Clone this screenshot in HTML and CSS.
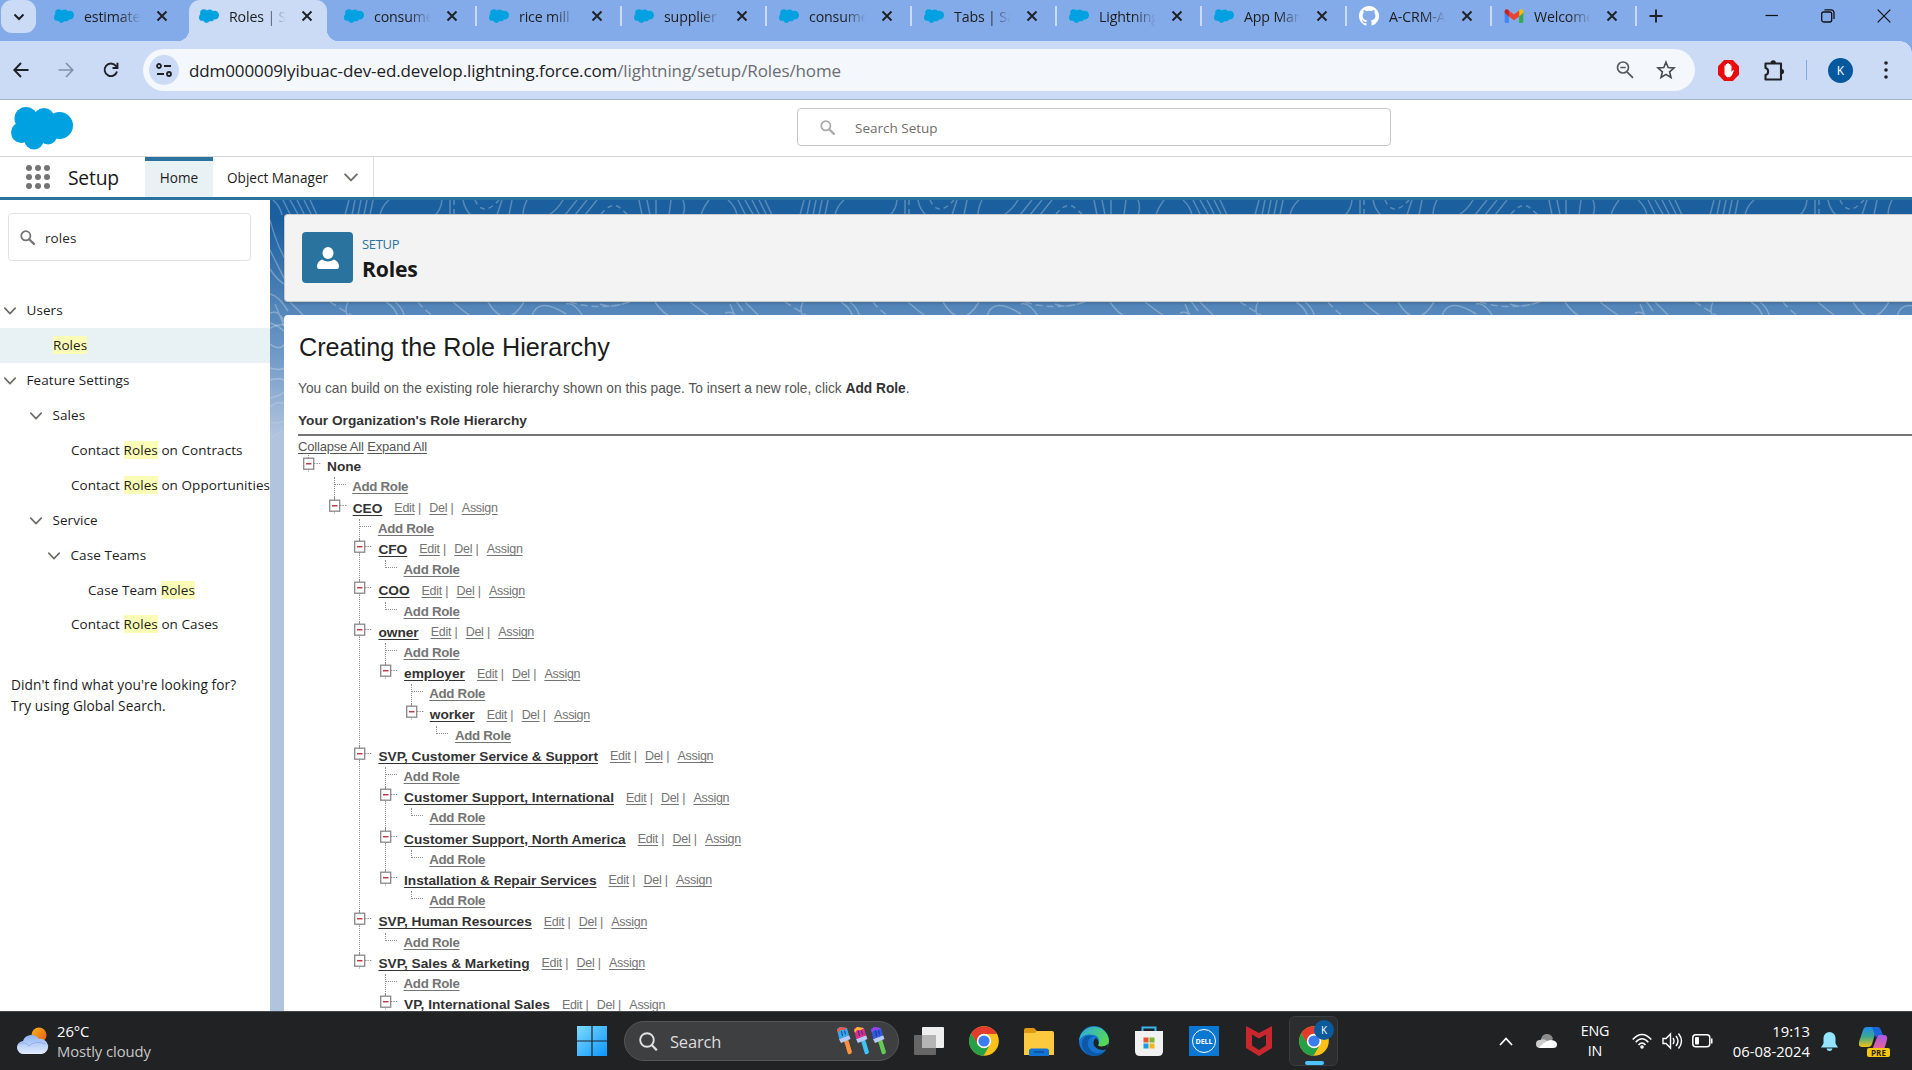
FILE: index.html
```html
<!DOCTYPE html>
<html lang="en">
<head>
<meta charset="utf-8">
<title>Roles | Salesforce</title>
<link rel="stylesheet" href="styles.css">
</head>
<body>
<svg class="defs" width="0" height="0" aria-hidden="true">
  <defs>
    <symbol id="cloud" viewBox="0 0 62 43"><g fill="#00a1e0"><circle cx="15" cy="12" r="11.5"/><circle cx="33" cy="12" r="10.5"/><circle cx="48.500" cy="19" r="13.500"/><circle cx="10.500" cy="26" r="10.500"/><circle cx="23" cy="33.500" r="9.500"/><circle cx="37" cy="29" r="9"/><rect x="13" y="10" width="30" height="22"/></g></symbol>
    <symbol id="close" viewBox="0 0 12 12"><path d="M1.500 1.500l9 9M10.500 1.500l-9 9" stroke="#1f2023" stroke-width="1.900" fill="none"/></symbol>
    <symbol id="chev" viewBox="0 0 12 8"><path d="M.8 1.200L6 6.600l5.200-5.400" stroke="#706e6b" stroke-width="1.700" fill="none" stroke-linecap="round" stroke-linejoin="round"/></symbol>
    <symbol id="lens" viewBox="0 0 16 16"><circle cx="6.200" cy="6.200" r="4.900" fill="none" stroke="currentColor" stroke-width="1.900"/><path d="M9.800 9.800l5 5" stroke="currentColor" stroke-width="2.300" stroke-linecap="round"/></symbol>
    <symbol id="box" viewBox="0 0 18 17"><path d="M5.500 0v3M5.500 14.500v2.500" stroke="#888" stroke-dasharray="1 1"/><path d="M11 8.500h7" stroke="#888" stroke-dasharray="1.300 1.200"/><rect x=".7" y="3.200" width="10" height="11" fill="#fff" stroke="#888" stroke-width="1.300"/><path d="M3 8.700h5.500" stroke="#c23b48" stroke-width="1.500"/></symbol>
    <symbol id="chrome" viewBox="0 0 30 30"><circle cx="15" cy="15" r="14.800" fill="#fbc117"/><path d="M2.200 7.500A14.800 14.800 0 0 1 27.900 8H15a7 7 0 0 0-6.300 4.200L8.500 18.500z" fill="#e33b2e"/><path d="M2.200 7.500A14.800 14.800 0 0 0 14.500 29.800L21 18.700A7 7 0 0 1 8.900 18.500z" fill="#24a148"/><circle cx="15" cy="15" r="7.200" fill="#fff"/><circle cx="15" cy="15" r="5.600" fill="#3b7ded"/></symbol>
    <symbol id="brush" viewBox="0 0 17 28"><path d="M8 14l4-2 4 13q-1 3-4 2z" fill="var(--handle)"/><path d="M3 12l10-4 1.500 4-9.500 4z" fill="#b9c9f5"/><path d="M1 2l3-2 7 1 2 7.500L3.200 12z" fill="var(--paint)"/><path d="M1 3l3-3 7 1-3 2-4 0-2 3z" fill="var(--tip)"/><path d="M5.500 4l1 5M8.500 3.500l1 4" stroke="#173a7c" stroke-width="1"/></symbol>
  </defs>
</svg>

<div class="tabstrip">
  <div class="tab-search"><svg width="12" height="8" viewBox="0 0 12 8"><path d="M1.500 1.500L6 6l4.500-4.500" stroke="#1f2023" stroke-width="2" fill="none"/></svg></div>
  <div class="tabs">
    <div class="tab"><svg class="fav"><use href="#cloud"/></svg><span class="tab-title">estimate</span><svg class="x"><use href="#close"/></svg></div>
    <div class="tab active"><svg class="fav"><use href="#cloud"/></svg><span class="tab-title">Roles | Sa</span><svg class="x"><use href="#close"/></svg></div>
    <div class="tab sep"><svg class="fav"><use href="#cloud"/></svg><span class="tab-title">consume</span><svg class="x"><use href="#close"/></svg></div>
    <div class="tab sep"><svg class="fav"><use href="#cloud"/></svg><span class="tab-title">rice mill |</span><svg class="x"><use href="#close"/></svg></div>
    <div class="tab sep"><svg class="fav"><use href="#cloud"/></svg><span class="tab-title">supplier</span><svg class="x"><use href="#close"/></svg></div>
    <div class="tab sep"><svg class="fav"><use href="#cloud"/></svg><span class="tab-title">consume</span><svg class="x"><use href="#close"/></svg></div>
    <div class="tab sep"><svg class="fav"><use href="#cloud"/></svg><span class="tab-title">Tabs | Sa</span><svg class="x"><use href="#close"/></svg></div>
    <div class="tab sep"><svg class="fav"><use href="#cloud"/></svg><span class="tab-title">Lightning</span><svg class="x"><use href="#close"/></svg></div>
    <div class="tab sep"><svg class="fav"><use href="#cloud"/></svg><span class="tab-title">App Man</span><svg class="x"><use href="#close"/></svg></div>
    <div class="tab sep"><svg class="fav git" viewBox="0 0 16 16"><path fill="#fff" d="M8 0C3.580 0 0 3.580 0 8c0 3.540 2.290 6.530 5.470 7.590.4.070.55-.17.55-.38v-1.490c-2.010.37-2.530-.49-2.690-.94-.09-.23-.48-.94-.82-1.130-.28-.15-.68-.52-.01-.53.63-.01 1.080.58 1.230.82.72 1.210 1.870.87 2.330.66.07-.52.28-.87.51-1.070-1.780-.2-3.640-.89-3.640-3.950 0-.87.31-1.590.82-2.150-.08-.2-.36-1.020.08-2.120 0 0 .67-.21 2.200.82a7.500 7.500 0 0 1 4 0c1.530-1.040 2.200-.82 2.200-.82.44 1.100.16 1.920.08 2.120.51.56.82 1.270.82 2.150 0 3.070-1.870 3.750-3.650 3.950.29.25.54.73.54 1.480v2.200c0 .21.15.46.55.38A8 8 0 0 0 8 0z"/></svg><span class="tab-title">A-CRM-A</span><svg class="x"><use href="#close"/></svg></div>
    <div class="tab sep"><svg class="fav mail" viewBox="0 0 20 15"><path d="M0 3h4.500v12H1.500A1.500 1.500 0 0 1 0 13.500z" fill="#4285f4"/><path d="M15.500 3H20v10.500a1.500 1.500 0 0 1-1.500 1.500h-3z" fill="#34a853"/><path d="M15.500 1.500C18 -.8 20 .5 20 2.500V4l-4.500 4z" fill="#fbbc04"/><path d="M4.500 1.500L10 6l5.500-4.500V8L10 12 4.500 8z" fill="#ea4335"/><path d="M0 2.500C0 .5 2.500-.8 4.500 1.500V8L0 4z" fill="#c5221f"/></svg><span class="tab-title">Welcome</span><svg class="x"><use href="#close"/></svg></div>
  </div>
  <svg class="plus" width="14" height="14" viewBox="0 0 14 14"><path d="M7 .5v13M.5 7h13" stroke="#1f2023" stroke-width="1.900"/></svg>
  <div class="window-controls">
    <svg width="14" height="14" viewBox="0 0 14 14"><path d="M.5 6.500h12.500" stroke="#111" stroke-width="1.200"/></svg>
    <svg width="14" height="14" viewBox="0 0 14 14"><rect x=".7" y="3" width="10" height="10" rx="2" fill="none" stroke="#111" stroke-width="1.300"/><path d="M3.500.8H10a3 3 0 0 1 3 3V10" fill="none" stroke="#111" stroke-width="1.300"/></svg>
    <svg width="14" height="14" viewBox="0 0 14 14"><path d="M.7.7l12.600 12.600M13.300.7L.7 13.300" stroke="#111" stroke-width="1.200"/></svg>
  </div>
</div>

<div class="toolbar">
  <div class="nav-buttons">
    <svg width="16" height="16" viewBox="0 0 16 16"><path d="M8 1L1.300 8 8 15M1.500 8H15.500" stroke="#1f2023" stroke-width="1.900" fill="none"/></svg>
    <svg width="16" height="16" viewBox="0 0 16 16"><path d="M8 1l6.700 7L8 15M14.500 8H.5" stroke="#8590a8" stroke-width="1.700" fill="none"/></svg>
    <svg width="16" height="16" viewBox="0 0 16 16"><path d="M14 9.500A6.300 6.300 0 1 1 12.800 3.800L14.500 6" stroke="#1f2023" stroke-width="1.900" fill="none"/><path d="M15.400.8V7H9.500V5h4V.8z" fill="#1f2023"/></svg>
  </div>
  <div class="omnibox">
    <div class="site-info"><svg width="16" height="14" viewBox="0 0 16 14"><g stroke="#1f2023" stroke-width="1.800" fill="none"><circle cx="3" cy="3" r="2"/><path d="M8 3h7M1 11h7"/><circle cx="13" cy="11" r="2"/></g></svg></div>
    <div class="url">ddm000009lyibuac-dev-ed.develop.lightning.force.com<span>/lightning/setup/Roles/home</span></div>
    <svg class="zoomout" width="18" height="18" viewBox="0 0 18 18"><g fill="none" stroke="#55585d" stroke-width="1.700"><circle cx="7" cy="6.500" r="5.500"/><path d="M11 10.800l6 6M4.300 6.500h5.400"/></g></svg>
    <svg width="20" height="20" viewBox="0 0 20 20"><path d="M10 2.200l2.200 5.400 5.800.4-4.400 3.800 1.400 5.700-5-3.100-5 3.100 1.400-5.700L2 8l5.800-.4z" fill="none" stroke="#46494e" stroke-width="1.600"/></svg>
  </div>
  <svg class="blocker" width="21" height="21" viewBox="0 0 21 21"><path d="M6.200 0h8.600L21 6.200v8.600L14.800 21H6.200L0 14.800V6.200z" fill="#ea0c0c"/><path d="M6.500 10V5.500h1.300V4h1.500V3h1.500v1h1.500v1.500h1.200V12l1.500-2 1 .6-2 4.400-2 2.300H9l-2.500-3z" fill="#fff"/></svg>
  <svg class="puzzle" width="21" height="21" viewBox="0 0 21 21"><path d="M1.500 3.500h15.500v16H1.500V15c3.500-.5 3.500-6.500 0-7z" fill="none" stroke="#1f2023" stroke-width="2.100" stroke-linejoin="round"/><path d="M6.500 3a2.700 2.700 0 0 1 5.400 0M17.500 9a2.600 2.600 0 0 1 0 5.200" fill="#1f2023"/></svg>
  <div class="divider"></div>
  <div class="avatar">K</div>
  <svg class="kebab" width="4" height="18" viewBox="0 0 4 18"><g fill="#1f2023"><circle cx="2" cy="2" r="1.800"/><circle cx="2" cy="9" r="1.800"/><circle cx="2" cy="16" r="1.800"/></g></svg>
</div>

<header class="sf-header">
  <svg class="logo"><use href="#cloud"/></svg>
  <div class="global-search"><svg width="15" height="15"><use href="#lens"/></svg><span>Search Setup</span></div>
</header>

<nav class="sf-nav">
  <svg class="waffle" width="24" height="24" viewBox="0 0 24 24"><g fill="#747474"><circle cx="3" cy="3" r="3"/><circle cx="12" cy="3" r="3"/><circle cx="21" cy="3" r="3"/><circle cx="3" cy="12" r="3"/><circle cx="12" cy="12" r="3"/><circle cx="21" cy="12" r="3"/><circle cx="3" cy="21" r="3"/><circle cx="12" cy="21" r="3"/><circle cx="21" cy="21" r="3"/></g></svg>
  <div class="app-name">Setup</div>
  <div class="nav-tab current"><span>Home</span></div>
  <div class="nav-tab"><span>Object Manager</span><svg width="14" height="9"><use href="#chev"/></svg></div>
</nav>

<div class="body">
  <aside class="sidebar">
    <div class="quick-find"><svg width="15" height="15"><use href="#lens"/></svg><span>roles</span></div>
    <ul class="setup-tree">
      <li class="l0"><svg><use href="#chev"/></svg>Users</li>
      <li class="l1 leaf selected"><mark>Roles</mark></li>
      <li class="l0"><svg><use href="#chev"/></svg>Feature Settings</li>
      <li class="l1"><svg><use href="#chev"/></svg>Sales</li>
      <li class="l2 leaf"><span>Contact <mark>Roles</mark> on Contracts</span></li>
      <li class="l2 leaf"><span>Contact <mark>Roles</mark> on Opportunities</span></li>
      <li class="l1"><svg><use href="#chev"/></svg>Service</li>
      <li class="l2"><svg><use href="#chev"/></svg>Case Teams</li>
      <li class="l3 leaf"><span>Case Team <mark>Roles</mark></span></li>
      <li class="l2 leaf"><span>Contact <mark>Roles</mark> on Cases</span></li>
    </ul>
    <p class="hint">Didn't find what you're looking for?<br>Try using Global Search.</p>
  </aside>

  <main class="canvas">
    <svg class="topo" width="1642" height="300">
      <defs><pattern id="contours" width="455" height="300" patternUnits="userSpaceOnUse">
        <g fill="none" stroke="#fff" stroke-opacity=".27" stroke-width="1.500">
          <path d="M3 0q7 6 9 15M13 0l8 16M20 0l9 16M27 0l8 16M34 0l8 16M40 0l7 15M79 0l-4 15M85 0l-3 15M91 0l-3 15M97 0l-3 15M103 0l-3 15M119 0q-7 6-9 15M172 0q-1 10-7 15M180 0v14M193 0q2 10 8 15M232 0l-5 15M242 0l-3 15M257 0q-4 8-4 15M293 0q-5 9-14 15M307 0l-12 15M317 0l-12 15M327 0l-12 15M369 0l3 15M377 0l3 15M386 0v15M401 0l-2 15M413 0q3 8 0 15M439 0q-6 8-8 15"/>
          <path stroke-dasharray="5 4" d="M184 0v15M205 0q8 18 24 0M331 14q10-12 18-7l9 8"/>
          <path d="M0 20q8 30 19 45M0 50l15 30M0 69q8 13 18 17M0 94q9 2 18 17M0 113q14-6 20 30M5 104q8 18 14 36M0 123q14 4 28 24M20 102l16 16M78 102q-5 10 2 16M116 102q10 6 12 16M125 102q8 6 10 16M183 102q10 9 20 16M218 102q18 30 36 0M262 116q6-20 34-2M296 104q8-3 18 14M385 102q8 12 18 16M420 102q10 8 22 16"/>
          <path stroke-dasharray="7 4" d="M148 102q8 10 20 17M300 102q30 9 60 0M330 104q14 5 30-3M60 102l24 15"/>
          <path d="M0 128q22-10 18 8T0 144M0 168q8 3 15 0M0 180q16-4 17 5t-17 13M0 207q8-7 15-3M0 222q8 3 18-3M2 238q6-8 16-6"/>
        </g></pattern></defs>
      <rect width="1642" height="260" fill="url(#contours)"/>
    </svg>
    <div class="page-header">
      <div class="role-icon"><svg width="22" height="22" viewBox="0 0 22 22"><ellipse cx="11" cy="6" rx="5.500" ry="6" fill="#fff"/><path d="M5 12.500q6 4 12 0 5 2 5 7 0 2.500-2 2.500H2q-2 0-2-2.500 0-5 5-7z" fill="#fff"/></svg></div>
      <div><div class="eyebrow">SETUP</div><h1>Roles</h1></div>
    </div>
    <section class="content">
      <h2>Creating the Role Hierarchy</h2>
      <p class="intro">You can build on the existing role hierarchy shown on this page. To insert a new role, click <b>Add Role</b>.</p>
      <h3>Your Organization's Role Hierarchy</h3>
      <div class="all-links"><a>Collapse All</a> <a>Expand All</a></div>
      <ul class="roles root">
        <li><div class="role"><svg><use href="#box"/></svg><b>None</b></div>
          <ul class="roles">
            <li class="add"><a>Add Role</a></li>
            <li><div class="role"><svg><use href="#box"/></svg><a class="name">CEO</a><a>Edit</a><i>|</i><a>Del</a><i>|</i><a>Assign</a></div>
              <ul class="roles">
                <li class="add"><a>Add Role</a></li>
                <li><div class="role"><svg><use href="#box"/></svg><a class="name">CFO</a><a>Edit</a><i>|</i><a>Del</a><i>|</i><a>Assign</a></div>
                  <ul class="roles"><li class="add"><a>Add Role</a></li></ul></li>
                <li><div class="role"><svg><use href="#box"/></svg><a class="name">COO</a><a>Edit</a><i>|</i><a>Del</a><i>|</i><a>Assign</a></div>
                  <ul class="roles"><li class="add"><a>Add Role</a></li></ul></li>
                <li><div class="role"><svg><use href="#box"/></svg><a class="name">owner</a><a>Edit</a><i>|</i><a>Del</a><i>|</i><a>Assign</a></div>
                  <ul class="roles">
                    <li class="add"><a>Add Role</a></li>
                    <li><div class="role"><svg><use href="#box"/></svg><a class="name">employer</a><a>Edit</a><i>|</i><a>Del</a><i>|</i><a>Assign</a></div>
                      <ul class="roles">
                        <li class="add"><a>Add Role</a></li>
                        <li><div class="role"><svg><use href="#box"/></svg><a class="name">worker</a><a>Edit</a><i>|</i><a>Del</a><i>|</i><a>Assign</a></div>
                          <ul class="roles"><li class="add"><a>Add Role</a></li></ul></li>
                      </ul></li>
                  </ul></li>
                <li><div class="role"><svg><use href="#box"/></svg><a class="name">SVP, Customer Service &amp; Support</a><a>Edit</a><i>|</i><a>Del</a><i>|</i><a>Assign</a></div>
                  <ul class="roles">
                    <li class="add"><a>Add Role</a></li>
                    <li><div class="role"><svg><use href="#box"/></svg><a class="name">Customer Support, International</a><a>Edit</a><i>|</i><a>Del</a><i>|</i><a>Assign</a></div>
                      <ul class="roles"><li class="add"><a>Add Role</a></li></ul></li>
                    <li><div class="role"><svg><use href="#box"/></svg><a class="name">Customer Support, North America</a><a>Edit</a><i>|</i><a>Del</a><i>|</i><a>Assign</a></div>
                      <ul class="roles"><li class="add"><a>Add Role</a></li></ul></li>
                    <li><div class="role"><svg><use href="#box"/></svg><a class="name">Installation &amp; Repair Services</a><a>Edit</a><i>|</i><a>Del</a><i>|</i><a>Assign</a></div>
                      <ul class="roles"><li class="add"><a>Add Role</a></li></ul></li>
                  </ul></li>
                <li><div class="role"><svg><use href="#box"/></svg><a class="name">SVP, Human Resources</a><a>Edit</a><i>|</i><a>Del</a><i>|</i><a>Assign</a></div>
                  <ul class="roles"><li class="add"><a>Add Role</a></li></ul></li>
                <li><div class="role"><svg><use href="#box"/></svg><a class="name">SVP, Sales &amp; Marketing</a><a>Edit</a><i>|</i><a>Del</a><i>|</i><a>Assign</a></div>
                  <ul class="roles">
                    <li class="add"><a>Add Role</a></li>
                    <li><div class="role"><svg><use href="#box"/></svg><a class="name">VP, International Sales</a><a>Edit</a><i>|</i><a>Del</a><i>|</i><a>Assign</a></div></li>
                  </ul></li>
              </ul></li>
          </ul></li>
      </ul>
    </section>
  </main>
</div>

<footer class="taskbar">
  <div class="weather">
    <svg width="32" height="28" viewBox="0 0 32 28"><defs><linearGradient id="sun" x1="0" y1="0" x2="1" y2="1"><stop offset="0" stop-color="#f7b321"/><stop offset="1" stop-color="#e8590c"/></linearGradient><linearGradient id="cl" x1="0" y1="0" x2="0" y2="1"><stop offset="0" stop-color="#8db2f3"/><stop offset="1" stop-color="#e3edfd"/></linearGradient></defs><circle cx="22" cy="8" r="7.500" fill="url(#sun)"/><path d="M7 27a6.500 6.500 0 0 1-1-13A9 9 0 0 1 22 12a7 7 0 0 1 3 15z" fill="url(#cl)"/><path d="M2 17q6-3 10 2 5-6 17-2" fill="none" stroke="#8fb0ea" stroke-width="1"/></svg>
    <div><div class="temp">26°C</div><div class="cond">Mostly cloudy</div></div>
  </div>
  <div class="apps">
    <svg width="30" height="30" viewBox="0 0 30 30"><defs><linearGradient id="win" x1="0" y1="0" x2="1" y2="1"><stop offset="0" stop-color="#7fdbff"/><stop offset="1" stop-color="#0a95ff"/></linearGradient></defs><path d="M0 0h14.400v14.400H0zM15.600 0H30v14.400H15.600zM0 15.600h14.400V30H0zM15.600 15.600H30V30H15.600z" fill="url(#win)"/></svg>
    <div class="task-search">
      <svg class="tlens" width="19" height="19" viewBox="0 0 19 19"><g fill="none" stroke="#e2e2e2" stroke-width="1.900"><circle cx="8" cy="8" r="6.800"/><path d="M12.800 13l5 5.300" stroke-width="2.200"/></g></svg><span>Search</span>
      <svg class="brush b1"><use href="#brush"/></svg><svg class="brush b2"><use href="#brush"/></svg><svg class="brush b3"><use href="#brush"/></svg>
    </div>
    <svg class="app" viewBox="0 0 30 30"><rect x="8" y="1" width="22" height="21" rx="1" fill="#eee"/><path d="M1 9h21v19a1 1 0 0 1-1 1H1a1 1 0 0 1-1-1V10a1 1 0 0 1 1-1z" fill="#666" /><path d="M8 9h14v13H8z" fill="#b5b5b5"/></svg>
    <svg class="app"><use href="#chrome"/></svg>
    <svg class="app" viewBox="0 0 30 30"><path d="M0 4q0-2 2-2h8l4 4h14q2 0 2 2v6H0z" fill="#e09a12"/><path d="M0 7h11l2-2h15q2 0 2 2v22H0z" fill="#fdc93f"/><path d="M5 30v-5q0-2.500 2.500-2.500h15q2.500 0 2.500 2.500v5z" fill="#1173d2"/><path d="M10 26h10" stroke="#0a4b9c" stroke-width="1.500"/></svg>
    <svg class="app" viewBox="0 0 30 30"><defs><linearGradient id="edge1" x1="0" y1="0" x2="1" y2=".5"><stop offset="0" stop-color="#2aa6ed"/><stop offset="1" stop-color="#55d857"/></linearGradient></defs><circle cx="15" cy="15" r="15" fill="#1474cf"/><path d="M1 10.500A15 15 0 0 1 30 15c0 6-7 7.500-11 4.500 2-3 2-9-4-10.500C9 7.500 3 9 0 15z" fill="url(#edge1)"/><path d="M18 9.500C10 9 7 17 10 22s9 7 16 3q-5 6-13 5C2 27 0 15 7 10z" fill="#0d59a8"/><path d="M17 12c-4 3-3 9 2 11 4 2 7 1 9 0l2-8-1 3c-4 3-8 3-10 1.500 1-2 1-5-2-7.500z" fill="#212224"/></svg>
    <svg class="app" viewBox="0 0 30 30"><path d="M8.500 6V1.500h13V6" fill="none" stroke="#35b5ef" stroke-width="2"/><path d="M1 5h28v20q0 5-5 5H6q-5 0-5-5z" fill="#f1f1f1"/><path d="M9.500 11.500h5v5h-5z" fill="#e8532c"/><path d="M15.500 11.500h5v5h-5z" fill="#7db72f"/><path d="M9.500 17.500h5v5h-5z" fill="#199fe0"/><path d="M15.500 17.500h5v5h-5z" fill="#f8b517"/></svg>
    <div class="dell"><span>DELL</span></div>
    <svg class="app" viewBox="0 0 30 30"><path d="M2 0l13 7L28 0v22l-13 8-13-8zM8 8.500V19.500l7 4.500 7-4.500V8.500l-7 4z" fill="#c8282d" fill-rule="evenodd"/></svg>
    <div class="active-app"><svg class="app"><use href="#chrome"/></svg><span class="badge">K</span><span class="underline"></span></div>
  </div>
  <div class="tray">
    <svg class="up" width="14" height="9" viewBox="0 0 14 9"><path d="M1 8l6-6.500L13 8" stroke="#fff" stroke-width="1.800" fill="none"/></svg>
    <svg class="drive" width="21" height="14" viewBox="0 0 21 14"><path d="M5 7A6 6 0 0 1 17 5l-8 6z" fill="#8c8c8c"/><path d="M4 14a4 4 0 0 1 0-8 6 6 0 0 1 6 0l5 8z" fill="#ccc"/><path d="M3 13.500Q10 6 15 6q6 .5 6 4.500 0 3.500-4 3.500H4z" fill="#fff"/></svg>
    <div class="lang">ENG<br>IN</div>
    <svg class="wifi" width="20" height="16" viewBox="0 0 20 16"><g fill="none" stroke="#fff" stroke-width="1.500"><path d="M.7 6.500q9.300-10 18.600 0M3.700 9.300q6.300-7 12.600 0M6.500 12q3.500-4 7 0"/></g><circle cx="10" cy="14" r="1.800" fill="#fff"/></svg>
    <svg class="vol" width="21" height="18" viewBox="0 0 21 18"><g fill="none" stroke="#fff" stroke-width="1.400"><path d="M1 6.500h3L8.500 2v14L4 11.500H1z"/><path d="M11 6q2 3 0 6M14 4q4 5 0 10M16.500 1.500q6 7.500 0 15"/></g></svg>
    <svg class="batt" width="21" height="14" viewBox="0 0 21 14"><rect x=".8" y=".8" width="17" height="12" rx="3" fill="none" stroke="#fff" stroke-width="1.500"/><rect x="3" y="3" width="4" height="7.600" rx="1" fill="#fff"/><path d="M19 4.500h1.500v5H19z" fill="#fff"/></svg>
    <div class="clock">19:13<br>06-08-2024</div>
    <svg class="bell" width="17" height="19" viewBox="0 0 17 19"><path d="M8.500 0A6 6 0 0 1 14.500 6v5.500L17 15.500H0l2.500-4V6A6 6 0 0 1 8.500 0zM5.500 16.500h6q-.5 2.500-3 2.500t-3-2.500z" fill="#93e5ff"/></svg>
    <div class="copilot"><svg width="29" height="29" viewBox="0 0 29 29"><defs><linearGradient id="cp1" x1="0" y1="0" x2="0" y2="1"><stop offset="0" stop-color="#1c8cf0"/><stop offset=".5" stop-color="#41a88a"/><stop offset="1" stop-color="#f2c511"/></linearGradient><linearGradient id="cp2" x1="0" y1="0" x2="0" y2="1"><stop offset="0" stop-color="#a55ae8"/><stop offset="1" stop-color="#f0628c"/></linearGradient></defs><path d="M8 0h10l-5 17q-1 3-4 3H3q-4 0-3-5L4 3q1-3 4-3z" fill="url(#cp1)"/><path d="M13 0h6q2 0 3 3l2 5h-5l-2 3z" fill="#1a64d8"/><path d="M19 8h6q4 0 3 5l-3 10H13z" fill="url(#cp2)"/></svg><span>PRE</span></div>
  </div>
</footer>
</body>
</html>
```
FILE: styles.css
```css
* { box-sizing: border-box; }
body { margin: 0; width: 1912px; height: 1070px; overflow: hidden; display: flex; flex-direction: column; background: #fff; font-family: "Open Sans", "Noto Sans", sans-serif; color: #1d1d1d; }
ul { list-style: none; margin: 0; padding: 0; }
svg { display: block; flex: none; }
.defs { position: absolute; }

/* Browser tabs */
.tabstrip { height: 41px; flex: none; background: #84abe9; display: flex; }
.tab-search { width: 35px; height: 33px; margin-left: 1px; border-radius: 11px; background: #cbdbf6; display: flex; align-items: center; justify-content: center; flex: none; }
.tabs { display: flex; margin-left: 5px; }
.tab { width: 145px; height: 41px; display: flex; align-items: center; padding: 0 0 9px 13px; position: relative; }
.tab.sep::after { content: ""; position: absolute; right: -1px; top: 6px; width: 2px; height: 20px; background: #cbdbf6; }
.tab.active::before { content: ""; position: absolute; left: 3px; right: 4px; top: 0; bottom: 0; background: #cbdbf6; border-radius: 11px 11px 0 0; }
.tab.active::after { content: ""; position: absolute; left: -9px; right: -8px; bottom: 0; height: 12px; background: radial-gradient(circle at 0 0, transparent 12px, #cbdbf6 12.500px) left / 12px 12px no-repeat, radial-gradient(circle at 12px 0, transparent 12px, #cbdbf6 12.500px) right / 12px 12px no-repeat; }
.tab.active > * { position: relative; }
.fav { width: 20px; height: 14px; }
.fav.git { height: 20px; }
.tab-title { width: 58px; margin: 1px 14px 0 10px; font-size: 14.200px; letter-spacing: -.15px; white-space: nowrap; overflow: hidden; -webkit-mask-image: linear-gradient(90deg, #000 60%, transparent 98%); mask-image: linear-gradient(90deg, #000 60%, transparent 98%); }
.x { width: 12px; height: 12px; }
.plus { margin: 9px 0 0 13px; }
.window-controls { display: flex; margin-left: auto; padding: 9px 21px 0 0; gap: 42px; }

/* Address row */
.toolbar { height: 59px; flex: none; background: radial-gradient(circle at 0 12px, transparent 11.500px, #84abe9 12px) right top / 12px 12px no-repeat, #cbdbf6; border-bottom: 1px solid #9fb0ca; display: flex; align-items: center; padding-left: 13px; }
.nav-buttons { display: flex; gap: 29px; width: 130px; }
.omnibox { width: 1552px; height: 42px; border-radius: 21px; background: #f4f7fc; display: flex; align-items: center; padding: 0 19px 0 6px; }
.site-info { width: 30px; height: 30px; border-radius: 50%; background: #cbdbf6; display: flex; align-items: center; justify-content: center; }
.url { margin: 1px 0 0 10px; flex: 1; font-size: 17px; letter-spacing: -.11px; white-space: nowrap; color: #202124; }
.url span { color: #6a6d72; }
.zoomout { margin-right: 22px; }
.blocker { margin-left: 23px; }
.puzzle { margin-left: 25px; }
.divider { width: 1px; height: 20px; background: #84abe9; margin-left: 21px; }
.avatar { width: 25px; height: 25px; border-radius: 50%; background: #04589e; color: #fff; font-size: 12px; display: flex; align-items: center; justify-content: center; margin-left: 21px; }
.kebab { margin-left: 31px; }

/* Salesforce header */
.sf-header { height: 57px; flex: none; border-bottom: 1px solid #d4d4d4; display: flex; align-items: flex-start; padding: 6px 0 0 11px; }
.logo { width: 62px; height: 44px; }
.global-search { width: 594px; height: 38px; margin: 2px 0 0 724px; border: 1px solid #c6c6c6; border-radius: 4px; display: flex; align-items: center; padding-left: 22px; color: #aaa; }
.global-search span { margin: 1px 0 0 20px; font-size: 13.500px; color: #706e6b; }
.sf-nav { height: 43px; flex: none; display: flex; align-items: center; border-bottom: 3px solid #2a739e; padding-left: 26px; }
.waffle { width: 24px; height: 24px; }
.app-name { width: 77px; margin: 1px 0 0 18px; font-size: 19.300px; letter-spacing: -.2px; color: #181818; }
.nav-tab { height: 40px; display: flex; align-items: center; padding: 1px 15px 0 14px; border-right: 1px solid #dedede; font-size: 13.600px; gap: 16px; white-space: nowrap; }
.nav-tab.current { width: 68px; justify-content: center; background: #e8f1f4; border-top: 4px solid #2a739e; padding: 0 0 3px; border-right: 0; }

/* Setup sidebar */
.body { display: flex; flex: 1; min-height: 0; }
.sidebar { width: 270px; flex: none; padding-top: 13px; overflow: hidden; font-size: 13.500px; letter-spacing: .07px; white-space: nowrap; }
.quick-find { width: 243px; height: 48px; margin-left: 8px; border: 1px solid #e2e2e2; border-radius: 4px; display: flex; align-items: center; gap: 10px; padding-left: 11px; color: #747474; }
.quick-find span { color: #2b2826; font-size: 13.500px; margin-top: 1px; }
.setup-tree { margin-top: 32px; }
.setup-tree li { height: 34.900px; display: flex; align-items: center; }
.setup-tree svg { width: 12px; height: 8px; margin-right: 10.500px; margin-top: 2px; }
.setup-tree .l0 { padding-left: 4px; }
.setup-tree .l1 { padding-left: 30px; }
.setup-tree .l2 { padding-left: 48px; }
.setup-tree .l1.leaf { padding-left: 53px; }
.setup-tree .l2.leaf { padding-left: 71px; }
.setup-tree .l3.leaf { padding-left: 88px; }
.setup-tree .selected { background: #e8f1f4; }
mark { background: #fbfdb6; color: inherit; }
.hint { margin: 32px 0 0 11px; line-height: 21px; font-size: 13.700px; }

/* Main canvas */
.canvas { flex: 1; position: relative; padding: 14px 0 0 14px; background: linear-gradient(#1b5f9e 0, #1b5f9e 20px, #5486b9 110px, #6c97c5 150px, #b0c4df 235px, #b0c4df); display: flex; flex-direction: column; }
.topo { position: absolute; left: 0; top: 0; -webkit-mask-image: linear-gradient(#000 60%, transparent 85%); mask-image: linear-gradient(#000 60%, transparent 85%); }
.page-header { position: relative; height: 88px; flex: none; background: #f3f3f3; border: 1px solid #c9c9c9; border-right: 0; border-radius: 4px 0 0 4px; box-shadow: 0 2px 2px rgba(0,0,0,.12); display: flex; align-items: center; padding-left: 17px; gap: 9px; }
.role-icon { width: 51px; height: 51px; border-radius: 4px; background: #2a739e; display: flex; align-items: center; justify-content: center; margin-bottom: 1px; }
.eyebrow { font-size: 13px; line-height: 17px; color: #2a739e; letter-spacing: -.3px; margin-top: 2px; }
h1 { margin: 2px 0 0; font-size: 21.200px; line-height: 27px; font-weight: 700; letter-spacing: -.2px; color: #181818; }
.content { position: relative; flex: 1; margin-top: 13px; background: #fff; border-radius: 4px 0 0 0; padding: 17px 0 0 14px; font-family: "Liberation Sans", Arial, sans-serif; color: #4a4a56; overflow: hidden; }
h2 { margin: 0 0 0 1px; font-size: 25.200px; line-height: 30px; font-weight: 400; color: #1c1c1c; }
.intro { margin: 19px 0 0; font-size: 13.720px; line-height: 16px; color: #555; }
.intro b { color: #333; }
h3 { margin: 16px 0 0; font-size: 13.700px; line-height: 16px; color: #333; border-bottom: 2px solid #747474; height: 23px; }
.all-links { font-size: 13px; letter-spacing: -.18px; line-height: 16px; height: 20px; padding-top: 3px; color: #555; }
a { text-decoration: underline; text-underline-offset: 2px; }
.roles { padding-left: 25.700px; }
.roles.root { padding-left: 5px; }
.roles li { position: relative; }
.role { height: 21.380px; display: flex; align-items: center; white-space: nowrap; font-size: 12.500px; letter-spacing: -.28px; color: #747474; position: relative; }
.role svg { width: 18px; height: 17px; margin: -6px 6px 0 0; }
.role b { font-size: 13.700px; color: #333; letter-spacing: 0; }
.role .name { font-size: 13.700px; font-weight: 700; color: #333; margin-right: 12px; letter-spacing: 0; }
.role i { font-style: normal; margin: 0 8.300px 0 3.300px; }
.add { height: 20px; padding-left: 23.500px; font-size: 13.300px; letter-spacing: -.3px; line-height: 20px; font-weight: 700; color: #747474; }
.roles .roles > li::before { content: ""; position: absolute; left: 5px; top: 0; bottom: 0; border-left: 1px dotted #909090; }
.roles .roles > li:last-child::before { bottom: auto; height: 8px; }
.add::after { content: ""; position: absolute; left: 6px; top: 7px; width: 11px; border-top: 1px dotted #909090; }

/* Taskbar */
.taskbar { height: 59px; flex: none; background: #212224; border-top: 1px solid #45474a; color: #fff; display: flex; align-items: center; position: relative; z-index: 2; }
.weather { width: 577px; display: flex; align-items: center; padding-left: 17px; gap: 8px; font-size: 14.800px; line-height: 20px; letter-spacing: -.08px; }
.cond { color: #c8c8c8; }
.apps { display: flex; align-items: center; }
.task-search { width: 275px; height: 40px; border-radius: 20px; background: #3e3f41; border: 1px solid #545557; margin: 0 15px 0 17px; display: flex; align-items: center; padding-left: 14px; font-size: 16.500px; color: #ddd; letter-spacing: -.2px; }
.task-search span { width: 166px; margin-left: 12px; }
.brush { width: 17px; height: 28px; }
.b1 { --handle: #fb923c; --paint: #38a9ed; --tip: #f0593e; }
.b2 { --handle: #3fc1f5; --paint: #dd2c8b; --tip: #f7b733; }
.b3 { --handle: #62cb53; --paint: #3159e0; --tip: #9a43e6; }
.app { width: 30px; height: 30px; margin-right: 25px; }
.dell { width: 30px; height: 30px; margin-right: 25px; background: #0a77d2; display: flex; align-items: center; justify-content: center; font-size: 7px; font-weight: 700; }
.dell span { width: 24px; height: 24px; border: 1.500px solid #fff; border-radius: 50%; display: flex; align-items: center; justify-content: center; }
.active-app { width: 49px; height: 50px; margin-left: -10px; border: 1px solid #3b3c3e; border-radius: 6px; background: #2c2d2f; padding: 9px 0 0 9px; position: relative; }
.badge { position: absolute; right: 3px; top: 3px; width: 20px; height: 20px; border-radius: 50%; background: #0b5a9b; font-size: 10px; line-height: 20px; text-align: center; }
.underline { position: absolute; left: 15px; bottom: 0; width: 19px; height: 4px; border-radius: 2px; background: #4cc2ff; }
.tray { display: flex; align-items: center; margin-left: auto; padding-right: 23px; font-size: 14.300px; line-height: 20px; }
.drive { margin-left: 23px; }
.lang { width: 32px; text-align: center; margin-left: 22px; letter-spacing: -.2px; }
.wifi { margin-left: 21px; }
.vol { margin-left: 10px; }
.batt { margin-left: 9px; }
.clock { width: 88px; margin-left: 9px; text-align: right; font-size: 14.800px; }
.bell { margin-left: 11px; }
.copilot { margin-left: 21px; width: 30px; position: relative; }
.copilot span { position: absolute; right: -1px; bottom: -1px; width: 23px; height: 9px; border-radius: 2px; background: #f9c80e; color: #2b2410; font-size: 8px; line-height: 9px; font-weight: 700; text-align: center; }
```
